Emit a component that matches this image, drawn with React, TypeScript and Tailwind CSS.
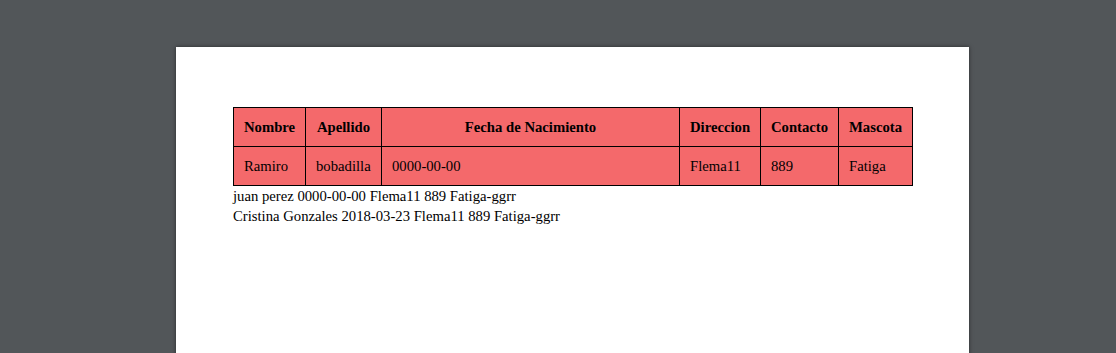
import React from 'react';

const headers = ['Nombre', 'Apellido', 'Fecha de Nacimiento', 'Direccion', 'Contacto', 'Mascota'];
const widths = ['w-[72px]', 'w-[76px]', 'w-[298px]', 'w-[81px]', 'w-[78px]', 'w-[74px]'];
const row = ['Ramiro', 'bobadilla', '0000-00-00', 'Flema11', '889', 'Fatiga'];

const extra = [
  'juan perez 0000-00-00 Flema11 889 Fatiga-ggrr',
  'Cristina Gonzales 2018-03-23 Flema11 889 Fatiga-ggrr',
];

const App: React.FC = () => {
  return (
    <div className="h-[353px] w-full overflow-hidden bg-[#525659] pl-[176px] pt-[47px]">
      <div
        className="h-[400px] w-[793px] bg-white pl-[57px] pt-[60px] text-[14.7px] text-black shadow-[0_0_4px_rgba(0,0,0,0.5)]"
        style={{ fontFamily: '"Liberation Serif", "Times New Roman", serif' }}
      >
        <table className="w-[679px] table-fixed border-collapse border border-black bg-[#f4696b]">
          <thead>
            <tr className="h-[39px]">
              {headers.map((h, i) => (
                <th key={h} className={`${widths[i]} border border-black px-[10px] text-center font-bold`}>
                  {h}
                </th>
              ))}
            </tr>
          </thead>
          <tbody>
            <tr className="h-[39px]">
              {row.map((c) => (
                <td key={c} className="border border-black px-[10px] text-left">
                  {c}
                </td>
              ))}
            </tr>
          </tbody>
        </table>
        <div className="leading-[20px]">
          {extra.map((line) => (
            <div key={line}>{line}</div>
          ))}
        </div>
      </div>
    </div>
  );
};

export default App;
